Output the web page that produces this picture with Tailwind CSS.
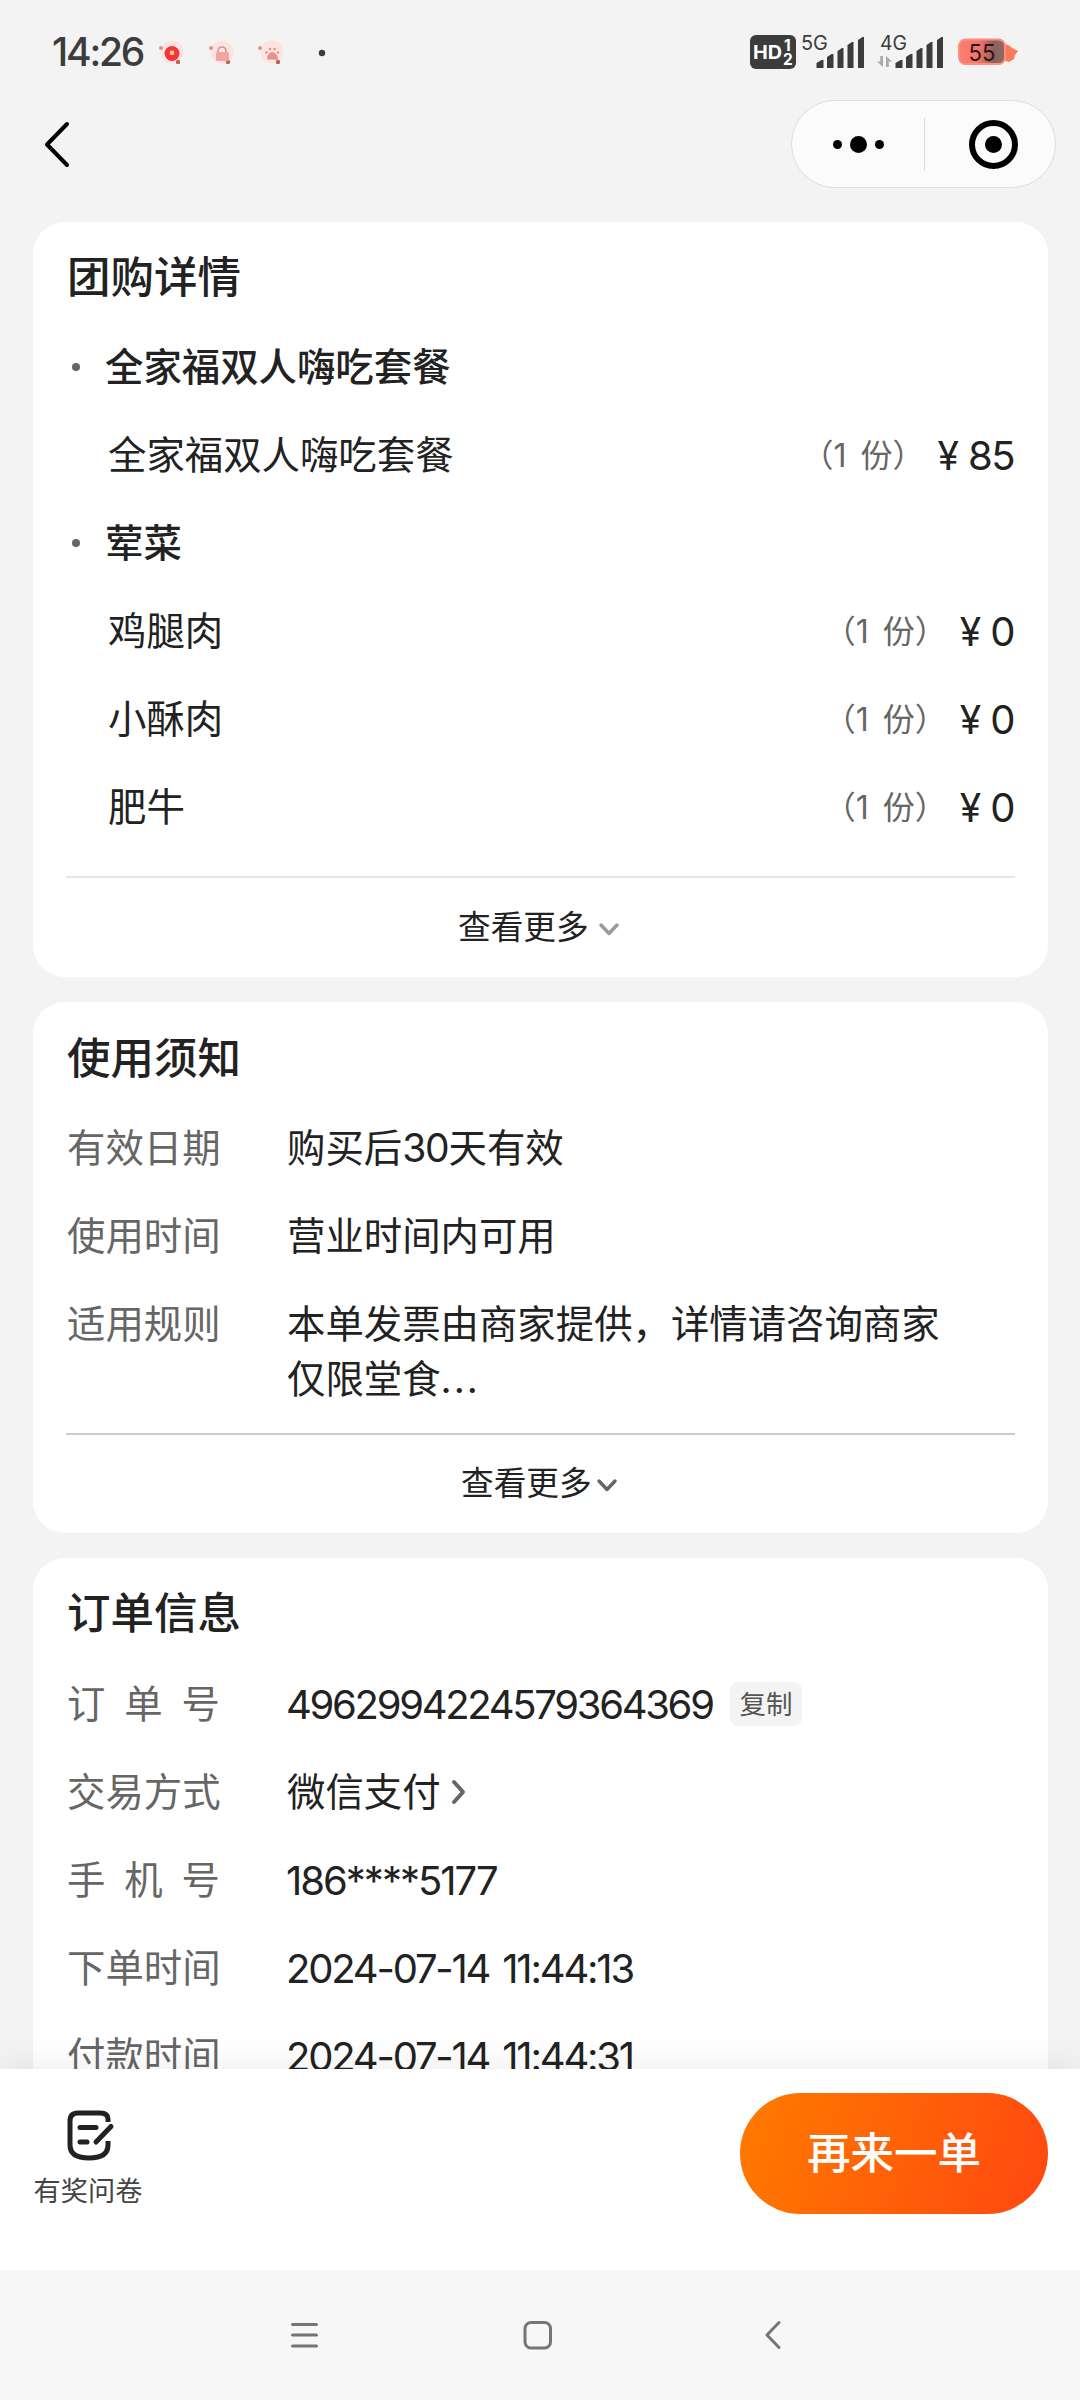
<!DOCTYPE html>
<html lang="zh-CN">
<head>
<meta charset="utf-8">
<title>订单详情</title>
<script src="https://cdn.jsdelivr.net/npm/@tailwindcss/browser@4"></script>
</head>
<body class="bg-[#f3f3f3]">
<div class="flex h-[2400px] w-[1080px] flex-col overflow-hidden bg-[#f3f3f3] font-['Inter','Noto_Sans_CJK_SC',sans-serif] text-[38.4px] leading-[55px] text-[#222]">

  <!-- status bar -->
  <div class="flex h-[100px] shrink-0 items-start">
    <div class="ml-[52px] mt-[32px] w-[103px] text-[39px] font-medium leading-[40px] tracking-[-2.2px] text-[#3c3c3c]">14:26</div>
    <svg class="mt-[32px] h-[40px] w-[180px]" viewBox="155 32 180 40">
      <g fill="#fbe3e1"><circle cx="172" cy="52" r="11.500"/><circle cx="222" cy="52" r="11.500"/><circle cx="272" cy="52" r="11.500"/></g>
      <g fill="#cf9a90"><circle cx="161" cy="48" r="2"/><circle cx="211" cy="48" r="2"/><circle cx="260" cy="48" r="2"/></g>
      <g fill="#c0604e"><circle cx="178" cy="62" r="2.200"/><circle cx="228" cy="62" r="2.200"/><circle cx="278" cy="62" r="2.200"/></g>
      <circle cx="172" cy="53.500" r="7.500" fill="#f2343c"/><rect x="169.800" y="50.500" width="4.400" height="4.400" rx="1.500" fill="#fbc48a"/>
      <path d="M218 52v-1a4 4 0 0 1 8 0v1" fill="none" stroke="#cf9590" stroke-width="1.600"/><rect x="216" y="52" width="13" height="9" rx="1.500" fill="#f3a49e"/>
      <g fill="#e3938b"><path d="M267 58c0-2 3-6 5-6s6 3 6 6-3 1.500-5.500 1.500-5.500 1-5.500-1.500z"/><circle cx="266.500" cy="52.500" r="1.300"/><circle cx="270" cy="49" r="1.300"/><circle cx="274.500" cy="49" r="1.300"/><circle cx="278" cy="52.500" r="1.300"/></g>
      <circle cx="322" cy="53" r="3.200" fill="#3c3c3c"/>
    </svg>
    <svg class="ml-[413px] mt-[30px] h-[44px] w-[280px]" viewBox="748 30 280 44" font-family="Inter" fill="#3c3c3c">
      <rect x="750" y="35" width="46" height="34" rx="6"/>
      <text x="753" y="59" font-size="19" font-weight="700" fill="#fff" textLength="29" lengthAdjust="spacingAndGlyphs">HD</text>
      <text x="784" y="50.500" font-size="15.500" font-weight="700" fill="#fff">1</text>
      <text x="783" y="65" font-size="15.500" font-weight="700" fill="#fff">2</text>
      <text x="801" y="50" font-size="20" textLength="27" lengthAdjust="spacingAndGlyphs">5G</text>
      <path d="M816.500 63l5-3h2v8h-7zM827 57l4.500-3h2v14H827zM837.500 51l4.500-3h1.500v20h-6zM847.500 45l4.500-3h1.500v26h-6zM858 40l4.500-3h1.500v31h-6z"/>
      <text x="880" y="50" font-size="20" textLength="27" lengthAdjust="spacingAndGlyphs">4G</text>
      <path transform="translate(79 0)" d="M816.500 63l5-3h2v8h-7zM827 57l4.500-3h2v14H827zM837.500 51l4.500-3h1.500v20h-6zM847.500 45l4.500-3h1.500v26h-6zM858 40l4.500-3h1.500v31h-6z"/>
      <path d="M883 56v11l-6-5.500h3.200V56zM886 67V56l6 5.500h-3.200V67z" fill="#aaa"/>
      <defs><linearGradient id="bat"><stop offset="0" stop-color="#fb7f73"/><stop offset=".45" stop-color="#f4736a"/><stop offset=".75" stop-color="#8f5f5c"/><stop offset="1" stop-color="#8d6a66"/></linearGradient></defs>
      <path d="M1003 43l7 3 2 2 6 3-3 4-1 4-5 3-6-2z" fill="#fb7a5c"/>
      <rect x="959" y="39.500" width="46" height="24.500" rx="6.500" fill="url(#bat)" stroke="#fd8e80" stroke-width="2"/>
      <text x="968.500" y="60.500" font-size="23" fill="#2c1614" textLength="27" lengthAdjust="spacingAndGlyphs">55</text>
    </svg>
  </div>

  <!-- mini-program navigation -->
  <div class="flex h-[122px] shrink-0 items-start justify-between pl-[44px] pr-[24px]">
    <svg class="mt-[20px] h-[50px] w-[28px]" viewBox="0 0 28 50" fill="none" stroke="#000" stroke-width="4" stroke-linecap="round" stroke-linejoin="round"><path d="M23 4L3 24.500 23 45"/></svg>
    <div class="flex h-[88px] w-[265px] items-center rounded-full border border-[#dedede] bg-[#fbfbfb]">
      <div class="flex w-[132px] items-center justify-center gap-[8px]">
        <span class="size-[9px] rounded-full bg-black"></span><span class="size-[17px] rounded-full bg-black"></span><span class="size-[9px] rounded-full bg-black"></span>
      </div>
      <div class="h-[53px] w-px bg-[#dadada]"></div>
      <div class="flex flex-1 items-center justify-center pl-[6px]">
        <div class="flex size-[49px] items-center justify-center rounded-full border-[6.5px] border-black"><span class="size-[17px] rounded-full bg-black"></span></div>
      </div>
    </div>
  </div>

  <!-- scrolling content -->
  <main class="flex h-[1847px] shrink-0 flex-col gap-[25px] overflow-hidden px-[33px]">
    <section class="h-[755px] w-[1015px] shrink-0 rounded-[32px] bg-white px-[33px] pt-[9px]">
      <h2 class="flex h-[92px] items-center pl-px text-[43.5px] font-medium">团购详情</h2>
      <div class="flex h-[88px] items-center font-medium"><span class="ml-[6px] size-[8px] rounded-full bg-[#666]"></span><span class="ml-[25px]">全家福双人嗨吃套餐</span></div>
      <div class="flex h-[88px] items-center pl-[42px] pr-px"><span class="flex-1">全家福双人嗨吃套餐</span><span class="text-[32px] text-[#666] [word-spacing:5px]">（1 份）</span><span class="ml-[13px] text-[39px]">¥</span><span class="ml-[9px] text-[40px] tracking-[-1.5px]">85</span></div>
      <div class="flex h-[88px] items-center font-medium"><span class="ml-[6px] size-[8px] rounded-full bg-[#666]"></span><span class="ml-[25px]">荤菜</span></div>
      <div class="flex h-[88px] items-center pl-[42px] pr-px"><span class="flex-1">鸡腿肉</span><span class="text-[32px] text-[#666] [word-spacing:5px]">（1 份）</span><span class="ml-[13px] text-[39px]">¥</span><span class="ml-[9px] text-[40px] tracking-[-1.5px]">0</span></div>
      <div class="flex h-[88px] items-center pl-[42px] pr-px"><span class="flex-1">小酥肉</span><span class="text-[32px] text-[#666] [word-spacing:5px]">（1 份）</span><span class="ml-[13px] text-[39px]">¥</span><span class="ml-[9px] text-[40px] tracking-[-1.5px]">0</span></div>
      <div class="flex h-[88px] items-center pl-[42px] pr-px"><span class="flex-1">肥牛</span><span class="text-[32px] text-[#666] [word-spacing:5px]">（1 份）</span><span class="ml-[13px] text-[39px]">¥</span><span class="ml-[9px] text-[40px] tracking-[-1.5px]">0</span></div>
      <div class="mt-[25px] flex h-[101px] items-center border-t-2 border-[#e6e6e6] pl-[392px]">
        <span class="text-[32.7px]">查看更多</span>
        <svg class="ml-[9px] mt-[3px] h-[16px] w-[22px]" viewBox="0 0 22 16" fill="none" stroke="#999" stroke-width="3.500" stroke-linecap="round" stroke-linejoin="round"><path d="M3 4l8 8.500L19 4"/></svg>
      </div>
    </section>

    <section class="h-[531px] w-[1015px] shrink-0 rounded-[32px] bg-white px-[33px] pt-[10px]">
      <h2 class="flex h-[92px] items-center pl-px text-[43.5px] font-medium">使用须知</h2>
      <div class="flex h-[88px] items-center"><span class="w-[220px] pl-px text-[#666]">有效日期</span><span class="pl-px">购买后<span class="text-[39px] tracking-[-1.2px]">30</span>天有效</span></div>
      <div class="flex h-[88px] items-center"><span class="w-[220px] pl-px text-[#666]">使用时间</span><span class="pl-px">营业时间内可用</span></div>
      <div class="flex h-[153px] items-start pt-[17px]"><span class="w-[220px] pl-px text-[#666]">适用规则</span><p class="pl-px">本单发票由商家提供，详情请咨询商家<br>仅限堂食<span class="tracking-[2px]">...</span></p></div>
      <div class="flex h-[98px] items-center border-t-2 border-[#cdcdcd] pl-[395px]">
        <span class="text-[32.7px]">查看更多</span>
        <svg class="ml-[4px] mt-[3px] h-[16px] w-[22px]" viewBox="0 0 22 16" fill="none" stroke="#666" stroke-width="3.500" stroke-linecap="round" stroke-linejoin="round"><path d="M3 4l8 8.500L19 4"/></svg>
      </div>
    </section>

    <section class="h-[700px] w-[1015px] shrink-0 rounded-[32px] bg-white px-[33px] pt-[9px]">
      <h2 class="flex h-[93px] items-center pl-px text-[43.5px] font-medium">订单信息</h2>
      <div class="flex h-[88px] items-center"><span class="mr-[66px] flex w-[154px] justify-between pl-px text-[#666]"><span>订</span><span>单</span><span>号</span></span><span class="w-[444px] text-[40px] tracking-[-2.3px]">4962994224579364369</span><span class="flex h-[44px] w-[72px] items-center justify-center rounded-[8px] bg-[#f4f4f4] text-[26.500px] text-[#555]">复制</span></div>
      <div class="flex h-[88px] items-center"><span class="w-[220px] pl-px text-[#666]">交易方式</span><span class="pl-px">微信支付</span><svg class="ml-[8px] h-[28px] w-[20px]" viewBox="0 0 20 28" fill="none" stroke="#666" stroke-width="4" stroke-linecap="round" stroke-linejoin="round"><path d="M5 4l9 10-9 10"/></svg></div>
      <div class="flex h-[88px] items-center"><span class="mr-[66px] flex w-[154px] justify-between pl-px text-[#666]"><span>手</span><span>机</span><span>号</span></span><span class="text-[40px] tracking-[-2px]">186****5177</span></div>
      <div class="flex h-[88px] items-center"><span class="w-[220px] pl-px text-[#666]">下单时间</span><span class="text-[40px] tracking-[-2.2px] [word-spacing:4px]">2024-07-14 11:44:13</span></div>
      <div class="flex h-[88px] items-center"><span class="w-[220px] pl-px text-[#666]">付款时间</span><span class="text-[40px] tracking-[-2.2px] [word-spacing:4px]">2024-07-14 11:44:31</span></div>
    </section>
  </main>

  <!-- action bar -->
  <footer class="relative flex h-[201px] shrink-0 items-start justify-between bg-white pl-[33px] pr-[32px] shadow-[0_-4px_32px_rgba(0,0,0,0.07)]">
    <div class="flex w-[110px] flex-col items-center pt-[38px]">
      <svg class="ml-[4px] h-[54px] w-[54px]" viewBox="0 0 54 54" fill="none" stroke="#222" stroke-width="5" stroke-linecap="round"><path stroke-linecap="butt" d="M45 15v-3Q45 6 37 6H15Q7 6 7 14V38Q7 51 26 51 45 51 45 38V34"/><path d="M17 20.500h16M17 35h7M33 35L48 19.500"/></svg>
      <span class="mt-[11px] text-[27.2px] leading-[40px] text-[#444]">有奖问卷</span>
    </div>
    <button class="mt-[24px] h-[121px] w-[308px] rounded-full bg-[linear-gradient(110deg,#ff7700_8%,#ff4a10_95%)] text-[43.5px] font-medium text-white">再来一单</button>
  </footer>

  <!-- system navigation -->
  <nav class="relative flex h-[130px] shrink-0 items-center bg-[#f7f7f7] pl-[289px]">
    <svg class="h-[32px] w-[32px]" viewBox="0 0 32 32" stroke="#757575" stroke-width="3" stroke-linecap="round"><path d="M3.500 5.500h24M3.500 16h24M3.500 27h24"/></svg>
    <svg class="ml-[201px] h-[32px] w-[32px]" viewBox="0 0 32 32" fill="none" stroke="#757575" stroke-width="3"><rect x="3" y="3.500" width="25.500" height="25.500" rx="6"/></svg>
    <svg class="ml-[209px] h-[32px] w-[20px]" viewBox="0 0 20 32" fill="none" stroke="#757575" stroke-width="3" stroke-linecap="round" stroke-linejoin="round"><path d="M16 3.500L4 16 16 28.500"/></svg>
  </nav>
</div>
</body>
</html>
